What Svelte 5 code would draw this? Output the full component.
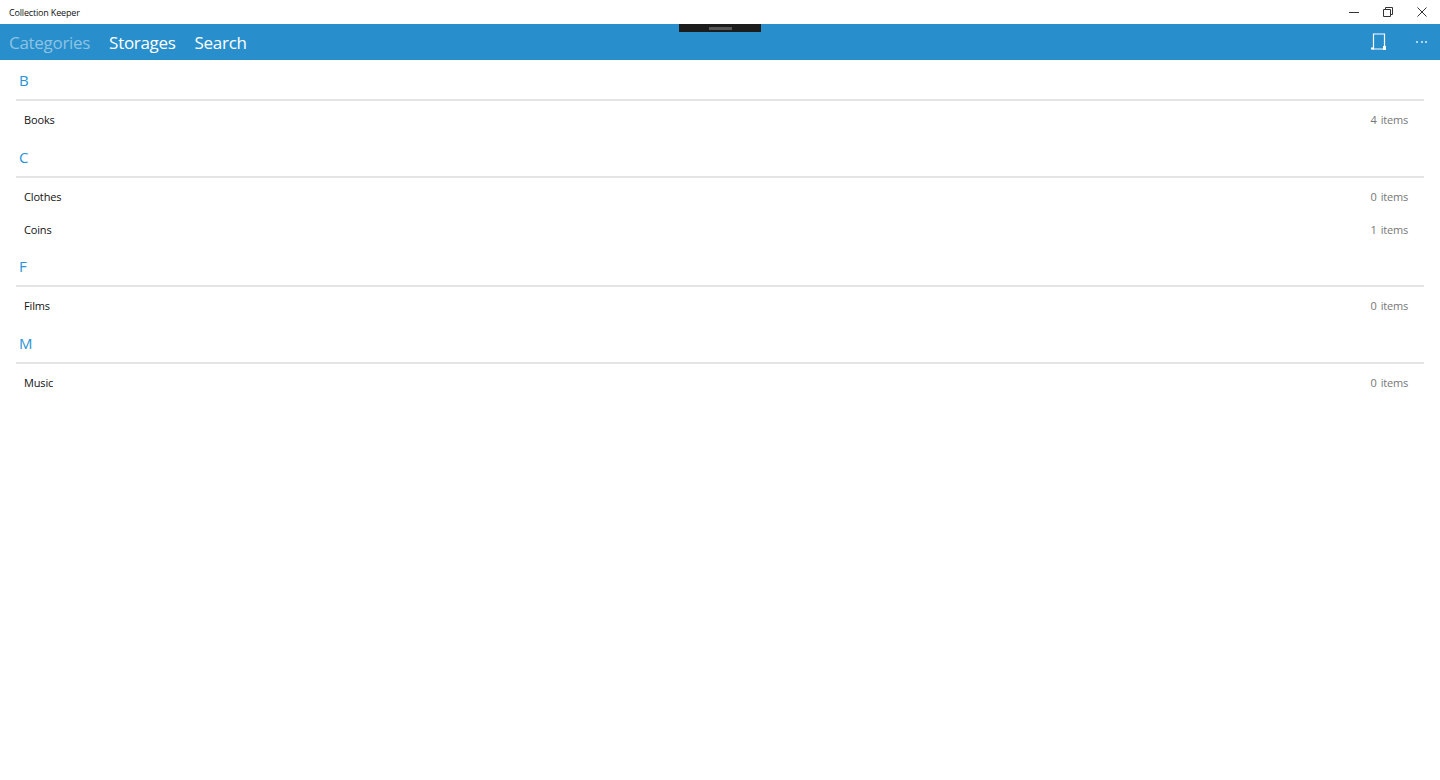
<script>
    const groups = [
        { letter: "B", items: [{ name: "Books", count: 4 }] },
        { letter: "C", items: [{ name: "Clothes", count: 0 }, { name: "Coins", count: 1 }] },
        { letter: "F", items: [{ name: "Films", count: 0 }] },
        { letter: "M", items: [{ name: "Music", count: 0 }] }
    ];
</script>

<div class="window">
    <div class="titlebar">
        <span class="app-title">Collection Keeper</span>
        <div class="win-buttons">
            <svg width="10" height="10" viewBox="0 0 10 10"><path d="M0 5.5h10" stroke="#333" fill="none" /></svg>
            <svg width="10" height="10" viewBox="0 0 10 10"><path d="M.5 2.5h7v7h-7zM2.5 2.5v-2h7v7h-2" stroke="#333" fill="none" /></svg>
            <svg width="10" height="10" viewBox="0 0 10 10"><path d="M.5.5l9 9M9.5.5l-9 9" stroke="#333" fill="none" /></svg>
        </div>
    </div>

    <header class="appbar">
        <nav class="tabs">
            <span class="tab active">Categories</span>
            <span class="tab">Storages</span>
            <span class="tab">Search</span>
        </nav>
        <div class="actions">
            <svg width="16" height="18" viewBox="0 0 16 18">
                <path d="M2.5 15.500v-14.500h11v15h-12" stroke="#fff" stroke-width="1.200" fill="none" />
                <rect x="0" y="14.500" width="3" height="2" fill="#fff" />
                <rect x="12" y="13" width="3" height="4" fill="#fff" />
            </svg>
            <span class="more">
                <i></i><i></i><i></i>
            </span>
        </div>
        <div class="grabber"><span></span></div>
    </header>

    <main class="list">
        {#each groups as group}
            <section class="group">
                <h2 class="letter">{group.letter}</h2>
                <ul class="rows">
                    {#each group.items as item}
                        <li class="row">
                            <span class="name">{item.name}</span>
                            <span class="count"><span class="num">{item.count}</span>items</span>
                        </li>
                    {/each}
                </ul>
            </section>
        {/each}
    </main>
</div>

<style>
    :global(body) {
        background: #fff;
    }

    .window {
        width: 1440px;
        height: 780px;
        overflow: hidden;
        font-family: "Open Sans", "Noto Sans", sans-serif;
    }

    .titlebar {
        height: 24px;
        display: flex;
        justify-content: space-between;
        align-items: center;
        padding: 0 13px 0 9px;
    }

    .app-title {
        font-size: 9px;
        letter-spacing: -0.17px;
        color: #111;
    }

    .win-buttons {
        display: flex;
        gap: 24px;
    }

    .appbar {
        position: relative;
        height: 36px;
        background: #298fcc;
        display: flex;
        justify-content: space-between;
        align-items: center;
        padding: 0 13px 0 9px;
    }

    .tabs {
        display: flex;
        gap: 19px;
        padding-top: 1px;
    }

    .tab {
        font-size: 17px;
        letter-spacing: -0.3px;
        color: #fff;
    }

    .tab.active {
        color: #8cc3e4;
    }

    .actions {
        display: flex;
        align-items: center;
        gap: 29px;
    }

    .more {
        display: flex;
        gap: 2.500px;
    }

    .more i {
        width: 2px;
        height: 2px;
        background: #dcedf7;
        border-radius: 50%;
    }

    .grabber {
        position: absolute;
        top: 0;
        left: 679px;
        width: 82px;
        height: 8px;
        background: #1c1c1c;
        display: flex;
        justify-content: center;
        align-items: center;
    }

    .grabber span {
        width: 23px;
        height: 3px;
        background: #555;
    }

    .list {
        padding: 0 16px;
    }

    .letter {
        height: 41px;
        box-sizing: border-box;
        margin: 0;
        padding: 9px 0 0 3px;
        border-bottom: 2px solid #e4e4e4;
        font-size: 15px;
        line-height: 22px;
        font-weight: 400;
        color: #2a94d6;
    }

    .rows {
        list-style: none;
        margin: 0;
        padding: 2px 16px 0.500px 8px;
    }

    .row {
        height: 33px;
        display: flex;
        justify-content: space-between;
        align-items: center;
        font-size: 11px;
        letter-spacing: -0.15px;
    }

    .name {
        color: #111;
    }

    .count {
        color: #777;
        letter-spacing: -0.2px;
    }

    .num {
        margin-right: 4px;
    }
</style>
